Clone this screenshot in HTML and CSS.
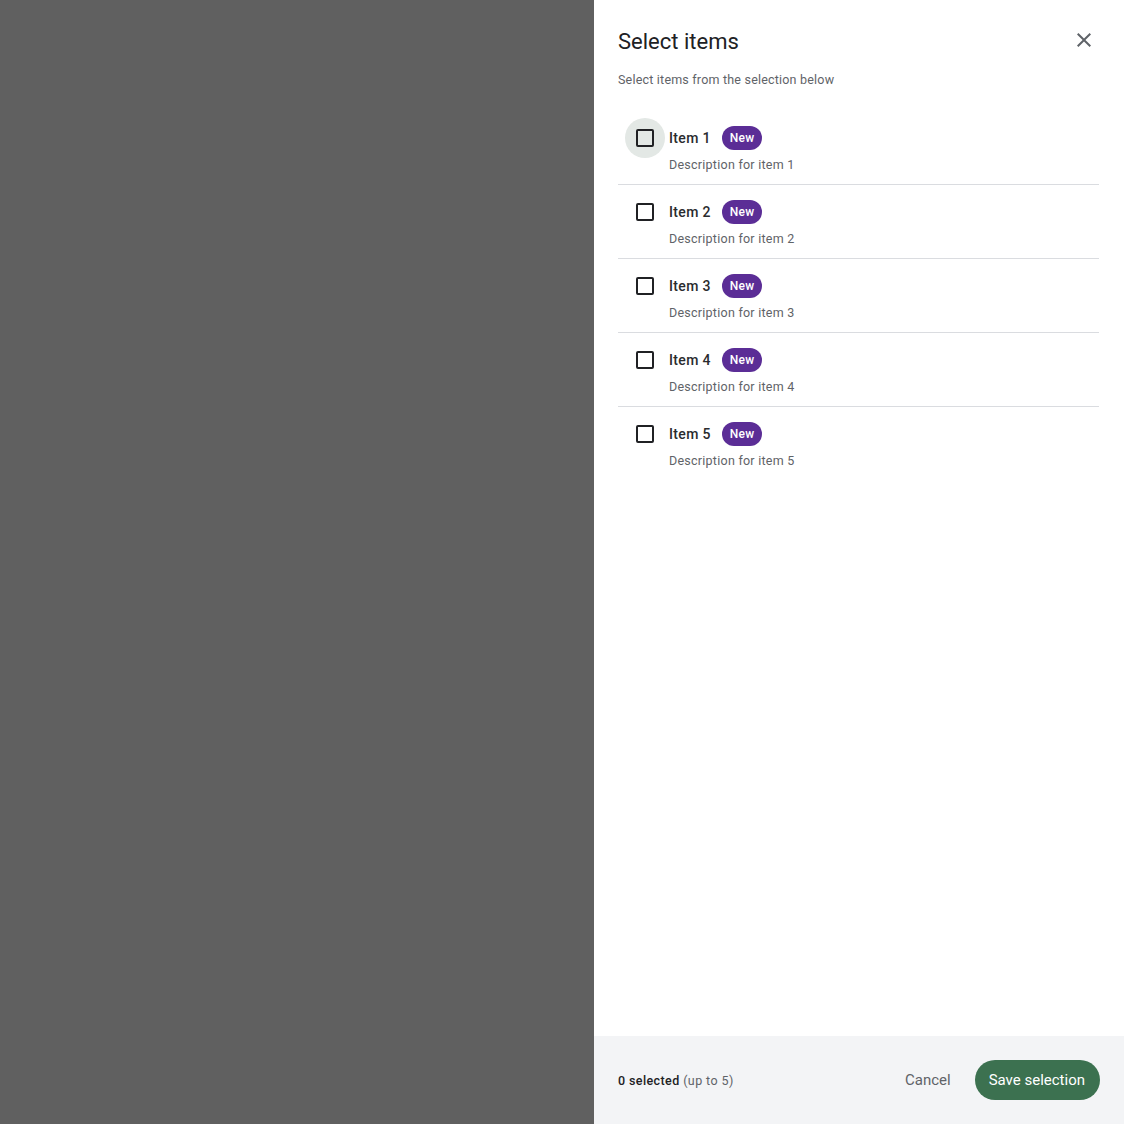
FILE: index.html
```html
<!DOCTYPE html>
<html>
<head>
<meta charset="utf-8">
<link rel="stylesheet" href="styles.css">
</head>
<body>
<div class="screen">
  <div class="overlay"></div>
  <aside class="panel">
    <div class="panel-body">
      <header class="head">
        <h1 class="title">Select items</h1>
        <button class="close" aria-label="Close">
          <svg width="24" height="24" viewBox="0 0 24 24"><path d="M19 6.41 17.59 5 12 10.59 6.41 5 5 6.41 10.59 12 5 17.59 6.41 19 12 13.41 17.59 19 19 17.59 13.41 12z" fill="#5f6368"/></svg>
        </button>
      </header>
      <p class="subtitle">Select items from the selection below</p>
      <ul class="list">
        <li class="row">
          <span class="cb-wrap hover"><span class="cb"></span></span>
          <div class="text">
            <div class="label-line"><span class="label">Item 1</span><span class="badge">New</span></div>
            <div class="desc">Description for item 1</div>
          </div>
        </li>
        <li class="row">
          <span class="cb-wrap"><span class="cb"></span></span>
          <div class="text">
            <div class="label-line"><span class="label">Item 2</span><span class="badge">New</span></div>
            <div class="desc">Description for item 2</div>
          </div>
        </li>
        <li class="row">
          <span class="cb-wrap"><span class="cb"></span></span>
          <div class="text">
            <div class="label-line"><span class="label">Item 3</span><span class="badge">New</span></div>
            <div class="desc">Description for item 3</div>
          </div>
        </li>
        <li class="row">
          <span class="cb-wrap"><span class="cb"></span></span>
          <div class="text">
            <div class="label-line"><span class="label">Item 4</span><span class="badge">New</span></div>
            <div class="desc">Description for item 4</div>
          </div>
        </li>
        <li class="row last">
          <span class="cb-wrap"><span class="cb"></span></span>
          <div class="text">
            <div class="label-line"><span class="label">Item 5</span><span class="badge">New</span></div>
            <div class="desc">Description for item 5</div>
          </div>
        </li>
      </ul>
    </div>
    <footer class="foot">
      <div class="count"><strong>0 selected</strong> <span class="limit">(up to 5)</span></div>
      <div class="actions">
        <button class="btn-text">Cancel</button>
        <button class="btn-primary">Save selection</button>
      </div>
    </footer>
  </aside>
</div>
</body>
</html>
```
FILE: styles.css
```css
* { box-sizing: border-box; }
html, body { margin: 0; padding: 0; }
body { font-family: Roboto, "Noto Sans", Arial, sans-serif; color: #202124; }
.screen { display: flex; width: 1124px; height: 1124px; }
.overlay { width: 594px; background: #606060; }
.panel { width: 530px; background: #fff; display: flex; flex-direction: column; }
.panel-body { flex: 1; padding: 0 25px 0 24px; }
.head { display: flex; align-items: center; justify-content: space-between; height: 38px; margin-top: 22px; }
.title { margin: 0; font-size: 22px; font-weight: 400; color: #202124; letter-spacing: 0; }
.close { border: 0; background: none; padding: 0; width: 24px; height: 24px; margin-right: 3px; margin-top: -3px; display: flex; }
.subtitle { margin: 11px 0 0; font-size: 12.5px; line-height: 18px; color: #5f6368; letter-spacing: 0.2px; }
.list { list-style: none; margin: 22px 0 0; padding: 0; }
.row { display: flex; height: 74px; padding-top: 15px; border-bottom: 1px solid #dadce0; }
.row.last { border-bottom: 0; }
.cb-wrap { width: 40px; height: 40px; margin: -8px 4px 0 7px; border-radius: 50%; display: flex; align-items: center; justify-content: center; flex: none; }
.cb-wrap.hover { background: #e3e8e5; }
.cb { width: 18px; height: 18px; border: 2px solid #202124; border-radius: 2px; }
.text { display: flex; flex-direction: column; }
.label-line { display: flex; align-items: center; height: 24px; }
.label { font-size: 14px; font-weight: 500; color: #2a2b2e; letter-spacing: 0.35px; }
.badge { margin-left: 11px; height: 24px; padding: 0 8px; border-radius: 12px; background: #5b2d96; color: #fff; font-size: 12px; font-weight: 500; display: flex; align-items: center; letter-spacing: 0.2px; }
.desc { margin-top: 6px; font-size: 12.5px; line-height: 18px; color: #5f6368; letter-spacing: 0.25px; }
.foot { height: 88px; background: #f3f4f6; display: flex; align-items: center; justify-content: space-between; padding: 0 24px; }
.count { font-size: 12.5px; color: #202124; letter-spacing: 0.4px; }
.count strong { font-weight: 500; }
.limit { color: #5f6368; }
.actions { display: flex; align-items: center; gap: 8px; }
.btn-text { border: 0; background: none; font-family: inherit; font-size: 15px; color: #5f6368; height: 40px; padding: 0 16px; }
.btn-primary { border: 0; background: #3c7150; color: #fff; font-family: inherit; font-size: 15px; height: 40px; padding: 0 15px 0 14px; border-radius: 20px; }
```
